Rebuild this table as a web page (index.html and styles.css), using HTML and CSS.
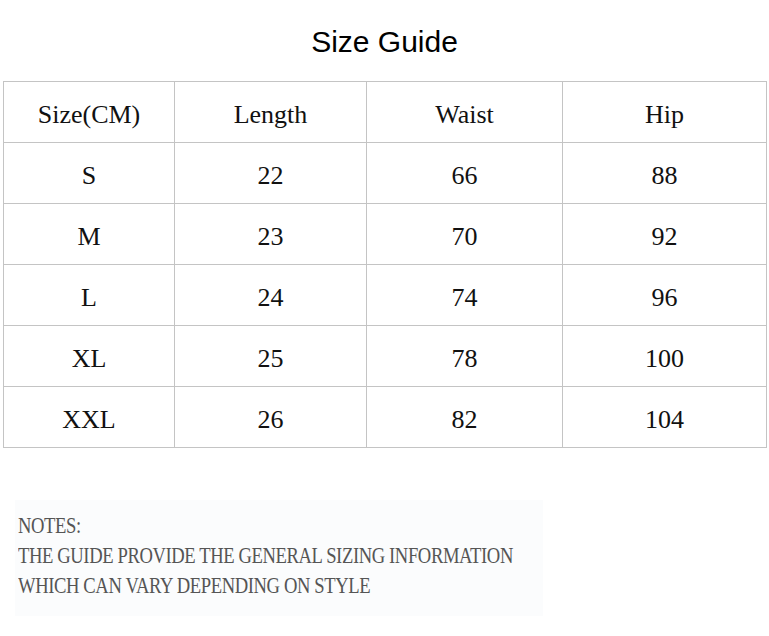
FILE: index.html
```html
<!DOCTYPE html>
<html>
<head>
<meta charset="utf-8">
<link rel="stylesheet" href="styles.css">
</head>
<body>
<div class="page">
  <h1 class="title">Size Guide</h1>
  <table class="sizes">
    <tr><td>Size(CM)</td><td>Length</td><td>Waist</td><td>Hip</td></tr>
    <tr><td>S</td><td>22</td><td>66</td><td>88</td></tr>
    <tr><td>M</td><td>23</td><td>70</td><td>92</td></tr>
    <tr><td>L</td><td>24</td><td>74</td><td>96</td></tr>
    <tr><td>XL</td><td>25</td><td>78</td><td>100</td></tr>
    <tr><td>XXL</td><td>26</td><td>82</td><td>104</td></tr>
  </table>
  <div class="notes">
    <p>NOTES:</p>
    <p>THE GUIDE PROVIDE THE GENERAL SIZING INFORMATION</p>
    <p>WHICH CAN VARY DEPENDING ON STYLE</p>
  </div>
</div>
</body>
</html>
```
FILE: styles.css
```css
html, body { margin: 0; padding: 0; background: #fff; }
.page { width: 769px; height: 636px; overflow: hidden; }
.title {
  margin: 0;
  padding-top: 24px;
  height: 57px;
  box-sizing: border-box;
  text-align: center;
  font-family: "Liberation Sans", Arial, sans-serif;
  font-weight: normal;
  font-size: 30px;
  line-height: 36px;
  color: #000;
}
.sizes {
  margin-left: 3px;
  margin-top: 24px;
  border-collapse: collapse;
  font-family: "Liberation Serif", serif;
  font-size: 26px;
  color: #111;
}
.sizes td {
  border: 1px solid #c4c4c4;
  height: 55px;
  padding: 5px 0 0 0;
  text-align: center;
}
.sizes td:nth-child(1) { width: 170px; }
.sizes td:nth-child(2) { width: 191px; }
.sizes td:nth-child(3) { width: 195px; }
.sizes td:nth-child(4) { width: 203px; }
.notes {
  margin-top: 52px;
  margin-left: 15px;
  width: 528px;
  height: 116px;
  box-sizing: border-box;
  padding: 10px 0 0 3px;
  background: #fbfcfd;
  font-family: "Liberation Serif", serif;
  font-size: 24px;
  line-height: 30px;
  color: #555;
  letter-spacing: -0.5px;
}
.notes p {
  margin: 0;
  white-space: nowrap;
  transform: scaleX(0.775);
  transform-origin: left center;
}
```
